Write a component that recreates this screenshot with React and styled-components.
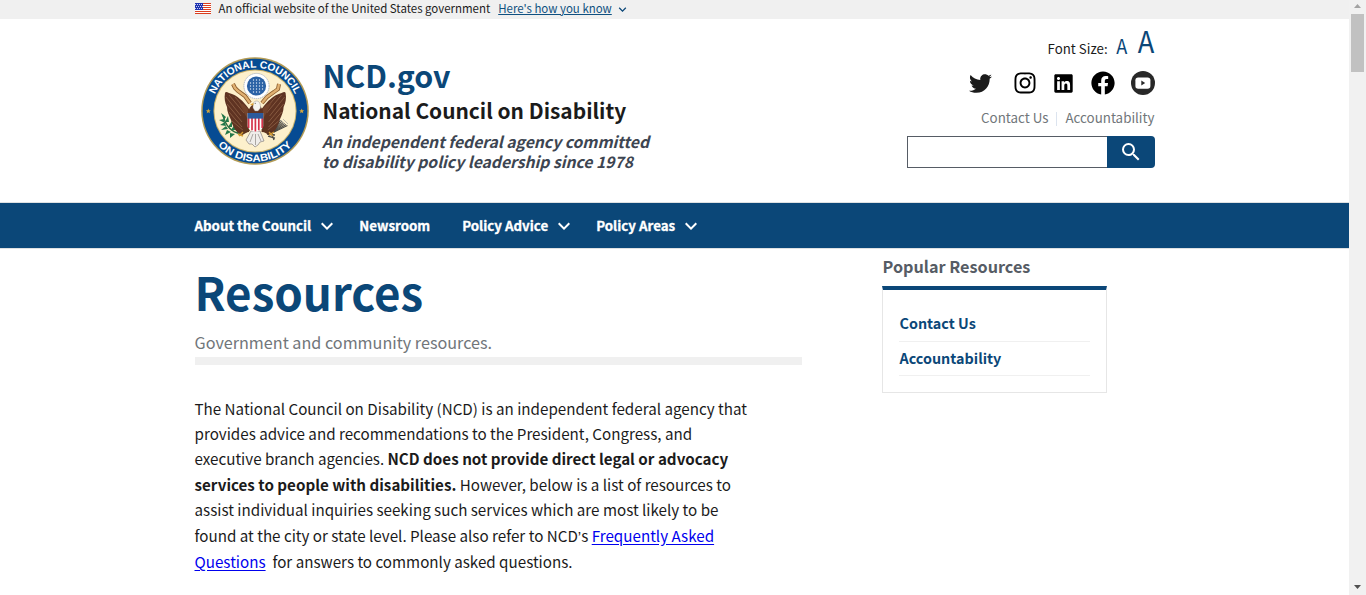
import React from 'react';
import styled, { createGlobalStyle } from 'styled-components';
import { FaTwitter, FaInstagram, FaLinkedin, FaFacebook } from 'react-icons/fa';
import { MdExpandMore, MdSearch } from 'react-icons/md';

const NAVY = '#0b4778';

const Global = createGlobalStyle`
  * { box-sizing: border-box; }
  html, body { margin: 0; height: 595px; overflow: hidden; background: #fff; }
  body { font-family: "Noto Sans CJK SC", "Open Sans", sans-serif; color: #1b1b1b; }
  a { color: inherit; text-decoration: none; }
`;

const Window = styled.div`
  display: flex;
  height: 595px;
`;
const Page = styled.div`
  flex: 1;
  min-width: 0;
`;
const Container = styled.div`
  width: 960px;
  margin: 0 auto;
  display: flex;
`;

/* Government banner */
const Banner = styled.div`
  height: 19px;
  background: #f0f0f0;
`;
const BannerRow = styled(Container)`
  height: 17px;
  align-items: center;
  font-size: 11.46px;
  line-height: 17px;
  white-space: nowrap;
`;
const BannerFlag = styled.svg`
  width: 16px;
  height: 11px;
  margin-right: 8px;
`;
const BannerLink = styled.a`
  margin-left: 8px;
  color: #0f5080;
  text-decoration: underline;
  text-underline-offset: 1px;
`;
const BannerChevron = styled(MdExpandMore)`
  color: ${NAVY};
  width: 15px;
  height: 15px;
  margin-left: 3px;
  margin-top: 1px;
`;

/* Header */
const Header = styled.header`
  height: 184px;
  border-bottom: 1px solid #dfe1e2;
`;
const HeaderRow = styled(Container)`
  height: 183px;
  align-items: flex-start;
`;
const Seal = styled.svg`
  width: 120px;
  height: 120px;
  margin-top: 31px;
  flex: none;
`;
const Brand = styled.div`
  margin-top: 36px;
  padding-left: 8px;
  white-space: nowrap;
`;
const BrandName = styled.div`
  font-weight: 700;
  font-size: 30.4px;
  line-height: 40px;
  color: ${NAVY};
`;
const BrandTitle = styled.div`
  font-weight: 700;
  font-size: 20.9px;
  line-height: 30px;
`;
const Tagline = styled.div`
  margin: 7px 0 0 -0.5px;
  font-weight: 700;
  font-style: italic;
  font-size: 15.68px;
  line-height: 20px;
  color: #3d4551;
`;
const Tools = styled.div`
  margin-left: auto;
  width: 248px;
  display: flex;
  flex-direction: column;
  align-items: flex-end;
`;
const FontSizer = styled.div`
  display: flex;
  align-items: baseline;
  height: 52px;
  padding-top: 2px;
  line-height: 40px;
  font-size: 13.27px;
`;
const SizeButton = styled.a`
  font-size: ${(p) => p.$size}px;
  margin-left: ${(p) => p.$gap}px;
  transform: translateY(${(p) => -(p.$lift || 0)}px) scaleX(0.9);
  transform-origin: 100% 50%;
  color: ${NAVY};
`;
const Social = styled.div`
  display: flex;
  align-items: center;
  height: 24px;
  color: #000;
`;
const SocialLink = styled.a`
  display: flex;
  margin-left: ${(p) => p.$gap || 0}px;
`;
const QuickLinks = styled.div`
  display: flex;
  align-items: center;
  margin-top: 12px;
  height: 22px;
  font-size: 13.35px;
  line-height: 22px;
  color: #71767a;
`;
const Divider = styled.span`
  width: 1px;
  height: 14px;
  margin: 2px 8.4px 0 7.6px;
  background: #dce4ef;
`;
const SearchForm = styled.div`
  display: flex;
  margin-top: 7px;
  height: 32px;
`;
const SearchInput = styled.div`
  width: 200px;
  border: 1px solid #565c65;
  border-right: 0;
`;
const SearchButton = styled.div`
  width: 48px;
  display: flex;
  align-items: center;
  justify-content: center;
  border-radius: 0 4px 4px 0;
  background: ${NAVY};
  color: #fff;
  padding-bottom: 1px;
`;

/* Navigation */
const Nav = styled.nav`
  height: 46px;
  background: ${NAVY};
  border-bottom: 1px solid #dfe1e2;
`;
const NavRow = styled(Container)`
  height: 45px;
  align-items: center;
  color: #fff;
  font-weight: 700;
  font-size: 13.32px;
  line-height: 45px;
  white-space: nowrap;
`;
const NavItem = styled.a`
  display: flex;
  align-items: center;
  margin-right: ${(p) => p.$gap}px;
  -webkit-text-stroke: 0.3px #fff;
`;
const NavChevron = styled(MdExpandMore)`
  width: 24px;
  height: 24px;
  margin-left: 4px;
`;

/* Main content */
const Article = styled.main`
  width: 607px;
`;
const PageTitle = styled.h1`
  margin: 14px 0 0;
  font-size: 45.7px;
  line-height: 56px;
  color: ${NAVY};
`;
const Intro = styled.p`
  margin: 10px 0 0;
  height: 36px;
  border-bottom: 8px solid #f0f0f0;
  font-size: 16.18px;
  line-height: 27px;
  color: #71767a;
`;
const Body = styled.p`
  width: 562px;
  margin: 30.6px 0 0;
  font-size: 15.18px;
  line-height: 25.4px;
  a { color: #00e; text-decoration: underline; text-underline-offset: 2px; }
`;
const Apostrophe = styled.span`
  font-family: "Liberation Sans", sans-serif;
`;
const Aside = styled.aside`
  width: 225px;
  margin-left: 80px;
  padding-top: 5px;
`;
const AsideTitle = styled.h2`
  margin: 0 0 0 1px;
  font-size: 16.22px;
  line-height: 24px;
  height: 32px;
  color: #565c65;
`;
const AsideBox = styled.div`
  height: 107px;
  padding: 17px 16px 0;
  border: 1px solid #e6e6e6;
  border-top: 4px solid ${NAVY};
`;
const AsideLink = styled.a`
  display: block;
  height: ${(p) => p.$h}px;
  border-bottom: 1px solid #f0f0f0;
  padding-left: 1px;
  font-weight: 700;
  font-size: 14.36px;
  line-height: 32px;
  color: ${NAVY};
`;

/* Window scroll bar */
const ScrollTrack = styled.div`
  width: 17px;
  padding: 3px 2px 5px;
  display: flex;
  flex-direction: column;
  align-items: center;
  background: #f1f1f1;
`;
const ScrollThumb = styled.div`
  width: 13px;
  height: 58px;
  margin-top: 5px;
  margin-bottom: auto;
  background: #c1c1c1;
`;

const stars = [];
for (let r = 0; r < 3; r += 1) for (let c = 0; c < 4; c += 1) stars.push([c * 2 + (r % 2), r * 2 + 1]);

const Flag = () => (
  <BannerFlag viewBox="0 0 16 11" shapeRendering="crispEdges">
    <rect width="16" height="11" fill="#fff" />
    {[0, 2, 4, 6, 8, 10].map((y) => <rect key={y} y={y} width="16" height="1" fill="#db3e1f" />)}
    <rect width="8" height="7" fill="#1e33b1" />
    {stars.map(([x, y]) => <rect key={`${x}-${y}`} x={x} y={y} width="1" height="1" fill="#c8cdf0" />)}
  </BannerFlag>
);

const Wing = () => (
  <g>
    <path d="M54 59C50 54 48 51 45 49C42 46 38 44 34 43C32 42 30.5 41.5 30 43C29 48 30 53 32 57C32 61 34 66 36 70C37 75 40 80 43 83L54 82Z" fill="#5f3322" />
    <path d="M31 47L46 66M32 54L47 72M34 62L47 77M37 71L49 81M34 45L49 63M40 47L51 60" stroke="#97684c" strokeWidth="0.7" fill="none" />
    <path d="M53 59C50 55 47 53 44 53L53 70Z" fill="#74432b" />
  </g>
);

const rays = Array.from({ length: 7 }, (_, i) => i);

const NcdSeal = () => (
  <Seal viewBox="0 0 120 120">
    <defs>
      <path id="arcTop" d="M16.6 61A43.4 43.4 0 0 1 103.4 61" />
      <path id="arcBottom" d="M9.4 61A50.6 50.6 0 0 0 110.6 61" />
    </defs>
    <circle cx="60" cy="61" r="53.8" fill="#b39b55" />
    <circle cx="60" cy="61" r="52.3" fill="#064b93" />
    <circle cx="60" cy="61" r="41.6" fill="#c9b169" />
    <circle cx="60" cy="61" r="40.6" fill="#fdf0cc" />
    <g fill="#fff" fontFamily="Liberation Sans, sans-serif" fontWeight="700" fontSize="10.2">
      <text textAnchor="middle"><textPath href="#arcTop" startOffset="50%" textLength="102" lengthAdjust="spacingAndGlyphs">NATIONAL COUNCIL</textPath></text>
      <text textAnchor="middle"><textPath href="#arcBottom" startOffset="50%" textLength="83" lengthAdjust="spacingAndGlyphs">ON DISABILITY</textPath></text>
    </g>
    <g fill="#d9a83c">
      <path d="M13.3 58.6l.7 1.7 1.8.1-1.4 1.1.5 1.8-1.6-1-1.6 1 .5-1.8-1.4-1.1 1.8-.1z" />
      <path d="M106.7 58.6l.7 1.7 1.8.1-1.4 1.1.5 1.8-1.6-1-1.6 1 .5-1.8-1.4-1.1 1.8-.1z" />
    </g>
    {/* ribbon */}
    <path d="M38 34L40 38L43 41L50 46L55 53M84 34L83 39L79 42L72 47L67 53" fill="none" stroke="#8a5b2c" strokeWidth="4" />
    <path d="M38 34L40 38L43 41L50 46L55 53M84 34L83 39L79 42L72 47L67 53" fill="none" stroke="#e0b070" strokeWidth="2.4" />
    {/* glory of stars */}
    <circle cx="61.5" cy="36" r="12.6" fill="#fff" stroke="#9aa7bd" strokeWidth="0.8" strokeDasharray="1.4 0.7" />
    <circle cx="61.5" cy="36" r="9.6" fill="#2b62a5" />
    <g fill="#dbe7f6">
      {[-6, -3, 0, 3, 6].map((y) => [-6, -3, 0, 3, 6].map((x) => (
        x * x + y * y < 60 ? <circle key={`${x}/${y}`} cx={61.5 + x} cy={36 + y} r="0.7" /> : null
      )))}
    </g>
    {/* olive branch */}
    <path d="M28 65C30 74 35 82 46 84" fill="none" stroke="#2c6b3c" strokeWidth="1.2" />
    <g fill="#23784a">
      <path d="M29 70l-3-7 5 4zM30 73l-6-3 5-1zM31 76l-6-1 5-3zM30 72l3-6 1 6zM33 79l-7 1 5-4zM33 77l4-6 0 6zM36 82l-6 3 2-5zM36 80l4-6 1 6zM40 84l-5 4 0-5zM41 83l3-5 1 5z" />
    </g>
    {/* arrows */}
    <g stroke="#4c4a45" strokeWidth="1.1" fill="none">
      {rays.map((i) => <path key={i} d={`M77 83L${84 + i * 1.4} ${69 + i * 1.1}`} />)}
      <path d="M73 86L80 88M72 84L80 85M76 82L79 90" strokeWidth="1.3" />
    </g>
    <path d="M86 70L90 75M88 69L93 74" stroke="#b9b5aa" strokeWidth="0.9" />
    {/* eagle */}
    <Wing />
    <g transform="matrix(-1 0 0 1 120.6 0)"><Wing /></g>
    <path d="M54 79L45 84M68 79L76 84" stroke="#5d351f" strokeWidth="4" />
    <path d="M43 84l5 2M44 86l4-4M74 85l5-3M74 82l4 4" stroke="#d39b35" strokeWidth="1.4" />
    <path d="M56 81L65 81L69 91L65 92L63 95L60 97L57 94L54 94L51 90Z" fill="#efedea" stroke="#77716d" strokeWidth="0.6" />
    <path d="M58 84L55 92M60.5 84V95M63 84L66 91" stroke="#8c8682" strokeWidth="0.7" />
    <path d="M53 65C53 58 57 54 60 54C65 54 68 58 68 65Z" fill="#5f3322" />
    <path d="M58 58C58 54 58 51.4 61.5 51C64.6 51 65.5 54 65.5 58L63 61H60Z" fill="#f6f4f0" stroke="#8a8178" strokeWidth="0.4" />
    <path d="M58.4 53l-3.4 1.6 3.3.8z" fill="#dfa12f" />
    <circle cx="60.2" cy="53.3" r="0.5" fill="#222" />
    {/* shield */}
    <path d="M52.6 63H68.2V76C68.2 79 64.6 80.6 60.4 82C56.2 80.6 52.6 79 52.6 76Z" fill="#fff" />
    <path d="M53.6 68V78M57 68V80.3M60.4 68V81.6M63.8 68V80.3M67.2 68V78" stroke="#d5334a" strokeWidth="1.7" />
    <path d="M52.6 63H68.2V68.6H52.6Z" fill="#2c5a9c" />
  </Seal>
);

const YouTube = () => (
  <svg width="24" height="24" viewBox="0 0 24 24">
    <circle cx="12" cy="12" r="12" fill="#282828" />
    <rect x="4.4" y="6.5" width="15" height="11.3" rx="2.8" fill="#fff" />
    <path d="M10.3 9.6L14.2 12L10.3 14.5Z" fill="#282828" />
  </svg>
);

const navItems = [
  { label: 'About the Council', menu: true, gap: 20 },
  { label: 'Newsroom', gap: 32 },
  { label: 'Policy Advice', menu: true, gap: 20 },
  { label: 'Policy Areas', menu: true, gap: 0 },
];

export default function App() {
  return (
    <>
      <Global />
      <Window>
        <Page>
          <Banner>
            <BannerRow>
              <Flag />
              <span>An official website of the United States government</span>
              <BannerLink>Here's how you know</BannerLink>
              <BannerChevron />
            </BannerRow>
          </Banner>
          <Header>
            <HeaderRow>
              <NcdSeal />
              <Brand>
                <BrandName>NCD.gov</BrandName>
                <BrandTitle>National Council on Disability</BrandTitle>
                <Tagline>An independent federal agency committed<br />to disability policy leadership since 1978</Tagline>
              </Brand>
              <Tools>
                <FontSizer>
                  <span>Font Size:</span>
                  <SizeButton $size={20.2} $gap={7.6}>A</SizeButton>
                  <SizeButton $size={30.2} $gap={8.7} $lift={1}>A</SizeButton>
                </FontSizer>
                <Social>
                  <SocialLink><FaTwitter size={23} color="#1b1b1b" /></SocialLink>
                  <SocialLink $gap={21}><FaInstagram size={24} /></SocialLink>
                  <SocialLink $gap={16}><FaLinkedin size={21} /></SocialLink>
                  <SocialLink $gap={17}><FaFacebook size={24} /></SocialLink>
                  <SocialLink $gap={16}><YouTube /></SocialLink>
                </Social>
                <QuickLinks>
                  <a>Contact Us</a>
                  <Divider />
                  <a>Accountability</a>
                </QuickLinks>
                <SearchForm>
                  <SearchInput />
                  <SearchButton><MdSearch size={24} /></SearchButton>
                </SearchForm>
              </Tools>
            </HeaderRow>
          </Header>
          <Nav>
            <NavRow>
              {navItems.map((item) => (
                <NavItem key={item.label} $gap={item.gap}>
                  {item.label}
                  {item.menu && <NavChevron />}
                </NavItem>
              ))}
            </NavRow>
          </Nav>
          <Container>
            <Article>
              <PageTitle>Resources</PageTitle>
              <Intro>Government and community resources.</Intro>
              <Body>
                The National Council on Disability (NCD) is an independent federal agency that provides advice
                and recommendations to the President, Congress, and executive branch
                agencies. <b>NCD does not provide direct legal or advocacy services to people with disabilities.</b>{' '}
                However, below is a list of resources to assist individual inquiries seeking such services which
                are most likely to be found at the city or state level. Please also refer to
                NCD<Apostrophe>{'\u2019'}</Apostrophe>s <a>Frequently Asked Questions</a>{'\u00a0'} for answers to commonly asked questions.
              </Body>
            </Article>
            <Aside>
              <AsideTitle>Popular Resources</AsideTitle>
              <AsideBox>
                <AsideLink $h={35}>Contact Us</AsideLink>
                <AsideLink $h={34}>Accountability</AsideLink>
              </AsideBox>
            </Aside>
          </Container>
        </Page>
        <ScrollTrack>
          <svg width="7" height="6" viewBox="0 0 7 6"><path d="M3.5 1L7 5H0Z" fill="#a3a3a3" /></svg>
          <ScrollThumb />
          <svg width="7" height="6" viewBox="0 0 7 6"><path d="M0 1H7L3.5 5Z" fill="#505050" /></svg>
        </ScrollTrack>
      </Window>
    </>
  );
}
